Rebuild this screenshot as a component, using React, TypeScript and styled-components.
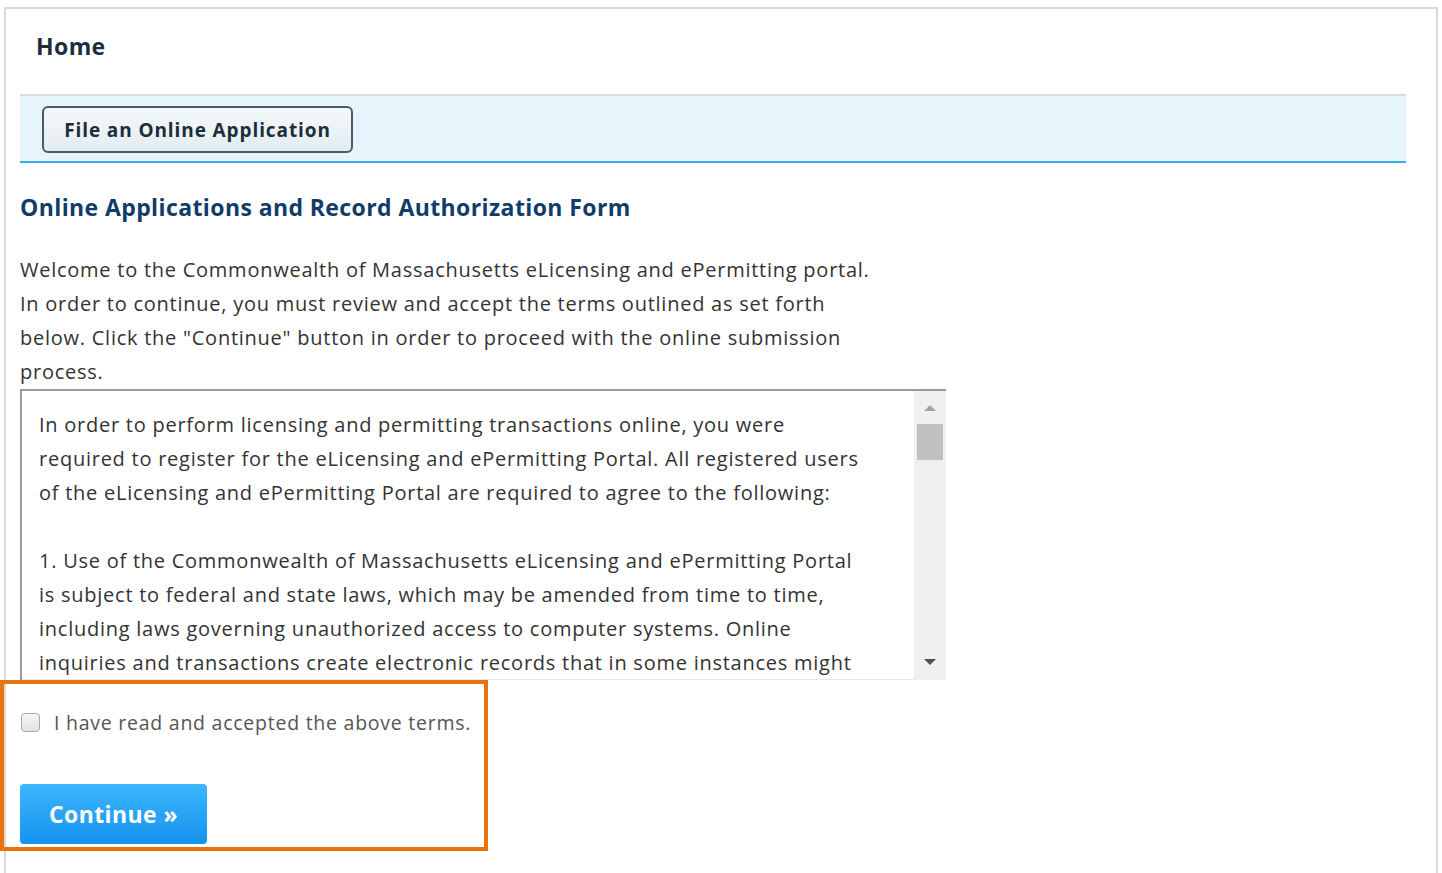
import React from "react";
import styled, { createGlobalStyle } from "styled-components";

const GlobalStyle = createGlobalStyle`
  * {
    box-sizing: border-box;
  }
  body {
    margin: 0;
    background: #ffffff;
    font-family: "Open Sans", Lato, Arial, sans-serif;
    color: #333333;
  }
`;

const Frame = styled.div`
  margin: 7px 0 0 4px;
  width: 1434px;
  min-height: 866px;
  border: 2px solid #dadada;
  border-bottom: none;
  padding: 0 30px 0 14px;
`;

const PageTitle = styled.h2`
  margin: 0;
  padding: 24px 0 0 16px;
  height: 85px;
  font-size: 23px;
  line-height: 26px;
  font-weight: 700;
  letter-spacing: 0.4px;
  color: #1e2d3a;
`;

const ActionBar = styled.div`
  display: flex;
  align-items: flex-start;
  padding: 10px 22px 8px;
  background: #e6f4fb;
  border-top: 2px solid #d4dde3;
  border-bottom: 2px solid #3aaee8;
`;

const OutlineButton = styled.button`
  width: 311px;
  height: 47px;
  border: 2px solid #475d6d;
  border-radius: 6px;
  background: linear-gradient(#f6f9fb, #e2ecf1);
  font-family: inherit;
  font-size: 19px;
  font-weight: 700;
  letter-spacing: 0.9px;
  color: #1c2d3a;
  cursor: pointer;
`;

const FormHeading = styled.h3`
  margin: 30px 0 0;
  font-size: 23px;
  line-height: 28px;
  font-weight: 700;
  letter-spacing: 0.4px;
  color: #0f3c69;
`;

const Intro = styled.p`
  margin: 32px 0 0;
  font-size: 20px;
  line-height: 34px;
  letter-spacing: 0.75px;
  color: #333333;
`;

const TermsBox = styled.div`
  display: flex;
  width: 926px;
  height: 291px;
  border-top: 2px solid #9a9a9a;
  border-left: 2px solid #9a9a9a;
  box-shadow: inset 0 -1px 0 #e6e6e6;
  overflow: hidden;
`;

const TermsText = styled.div`
  flex: 1;
  padding: 17px 0 0 17px;
  font-size: 20px;
  line-height: 34px;
  letter-spacing: 0.75px;
  color: #333333;
  white-space: pre-line;
`;

const Scrollbar = styled.div`
  width: 32px;
  flex: none;
  background: #f0f0f0;
  display: flex;
  flex-direction: column;
  align-items: center;
  padding: 14px 0 15px;
`;

const Arrow = styled.div<{ $down?: boolean }>`
  width: 0;
  height: 0;
  border-left: 6px solid transparent;
  border-right: 6px solid transparent;
  ${(p) =>
    p.$down
      ? "border-top: 6px solid #505050; margin-top: auto;"
      : "border-bottom: 6px solid #a3a3a3;"}
`;

const Thumb = styled.div`
  width: 26px;
  height: 36px;
  margin-top: 13px;
  background: #c1c1c1;
`;

const AgreeSection = styled.section`
  width: 488px;
  margin-left: -20px;
  border: 4px solid #e8720c;
  padding: 21px 0 3px 16px;
`;

const CheckRow = styled.label`
  display: flex;
  align-items: center;
  gap: 14px;
  height: 34px;
  padding-left: 1px;
  font-size: 19.5px;
  letter-spacing: 0.75px;
  color: #555555;
`;

const CheckBox = styled.span`
  width: 19px;
  height: 19px;
  flex: none;
  border: 1.5px solid #a9a9a9;
  border-radius: 4px;
  background: linear-gradient(#f7f7f7, #e1e1e1);
`;

const PrimaryButton = styled.button`
  display: block;
  margin-top: 45px;
  width: 187px;
  height: 60px;
  border: none;
  border-radius: 4px;
  background: linear-gradient(#3db7fd, #1592ee);
  font-family: inherit;
  font-size: 23px;
  font-weight: 700;
  letter-spacing: 0.4px;
  color: #ffffff;
  cursor: pointer;
`;

const terms = `In order to perform licensing and permitting transactions online, you were
required to register for the eLicensing and ePermitting Portal. All registered users
of the eLicensing and ePermitting Portal are required to agree to the following:

1. Use of the Commonwealth of Massachusetts eLicensing and ePermitting Portal
is subject to federal and state laws, which may be amended from time to time,
including laws governing unauthorized access to computer systems. Online
inquiries and transactions create electronic records that in some instances might`;

export default function App() {
  return (
    <>
      <GlobalStyle />
      <Frame>
        <PageTitle>Home</PageTitle>
        <ActionBar>
          <OutlineButton>File an Online Application</OutlineButton>
        </ActionBar>
        <FormHeading>Online Applications and Record Authorization Form</FormHeading>
        <Intro>
          Welcome to the Commonwealth of Massachusetts eLicensing and ePermitting portal.
          <br />
          In order to continue, you must review and accept the terms outlined as set forth
          <br />
          below. Click the "Continue" button in order to proceed with the online submission
          <br />
          process.
        </Intro>
        <TermsBox>
          <TermsText>{terms}</TermsText>
          <Scrollbar>
            <Arrow />
            <Thumb />
            <Arrow $down />
          </Scrollbar>
        </TermsBox>
        <AgreeSection>
          <CheckRow>
            <CheckBox />I have read and accepted the above terms.
          </CheckRow>
          <PrimaryButton>Continue »</PrimaryButton>
        </AgreeSection>
      </Frame>
    </>
  );
}
